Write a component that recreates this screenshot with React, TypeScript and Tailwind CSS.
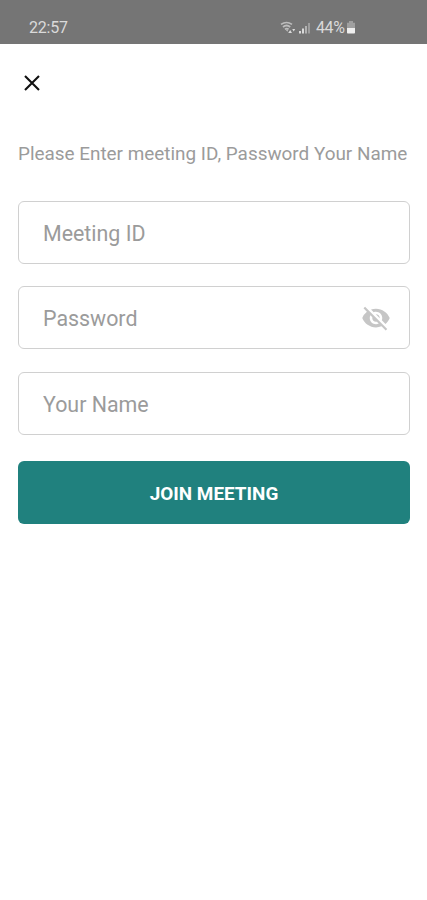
import React, { useState } from 'react';
import { MdVisibilityOff } from 'react-icons/md';

interface FieldProps {
  placeholder: string;
  type?: string;
  children?: React.ReactNode;
}

function Field({ placeholder, type = 'text', children }: FieldProps) {
  const [value, setValue] = useState('');

  return (
    <div className="flex h-[63px] items-center rounded-md border border-[#d0d0d0] bg-white pr-[18px] pl-6">
      <input
        type={type}
        value={value}
        onChange={(e) => setValue(e.target.value)}
        placeholder={placeholder}
        className="min-w-0 flex-1 bg-transparent pt-[3px] text-[21.4px] text-[#555] outline-none placeholder:text-[#9b9b9b]"
      />
      {children}
    </div>
  );
}

function StatusBar() {
  return (
    <div className="flex h-11 items-end justify-between bg-[#757575] pr-[71px] pb-1.5 pl-[29px] text-[#dadada]">
      <span className="text-base leading-5 tracking-[-0.2px]">22:57</span>
      <div className="flex items-center">
        {/* Wifi with transfer arrows */}
        <svg width="17" height="14" viewBox="0 0 17 14" fill="none" className="mr-0.5">
          <path d="M1 3.4Q6.5 -0.4 12 3.4M3 6Q6.5 3 10.2 6M5 8.3Q6.7 6.9 8.6 8.3" stroke="#bdbdbd" strokeWidth="1.7" />
          <path d="M5.6 8.8h2.6L7.4 10.8z" fill="#bdbdbd" />
          <path d="M8.2 12.1l2-3 1.8 3zM12.2 8h3l-1.5 2.6z" fill="currentColor" />
        </svg>
        {/* Signal bars */}
        <svg width="12" height="14" viewBox="0 0 12 14" fill="currentColor" className="mr-[5px]">
          <rect x="0" y="10" width="2" height="2.5" />
          <rect x="3" y="7.5" width="2" height="5" />
          <rect x="6" y="5" width="2" height="7.5" opacity="0.6" />
          <rect x="9" y="2" width="2" height="10.5" opacity="0.4" />
        </svg>
        <span className="text-base leading-5 tracking-[-0.4px]">44%</span>
        <svg width="10" height="14" viewBox="0 0 10 14" className="ml-[1.5px]">
          <path d="M3 0h4v1.8h2V7H1V1.8h2z" fill="#a0a0a0" />
          <path d="M1 7h8v4.8q0 .8-.8.8H1.8q-.8 0-.8-.8z" fill="#efefef" />
        </svg>
      </div>
    </div>
  );
}

export default function App() {
  return (
    <div className="min-h-screen w-full bg-white font-['Roboto',sans-serif]">
      <StatusBar />
      <main className="flex flex-col pr-[17px] pl-[18px]">
        <button aria-label="Close" className="mt-[31px] ml-1.5 h-4 w-4">
          <svg width="16" height="16" viewBox="0 0 16 16" fill="none" stroke="#111" strokeWidth="2.1">
            <path d="M1 1l14 14M15 1L1 15" />
          </svg>
        </button>

        <p className="mt-[51px] text-[18.9px] leading-6 whitespace-nowrap text-[#9b9b9b]">
          Please Enter meeting ID, Password Your Name
        </p>

        <form className="mt-[35px] flex flex-col" onSubmit={(e) => e.preventDefault()}>
          <div className="flex flex-col gap-[22.3px]">
            <Field placeholder="Meeting ID" />
            <Field placeholder="Password" type="password">
              <MdVisibilityOff size={30} color="#c6c6c6" />
            </Field>
            <Field placeholder="Your Name" />
          </div>
          <button type="submit" className="mt-[26.4px] h-[63px] rounded-md bg-[#20817e] pt-1 text-[18.9px] font-bold text-white">
            JOIN MEETING
          </button>
        </form>
      </main>
    </div>
  );
}
